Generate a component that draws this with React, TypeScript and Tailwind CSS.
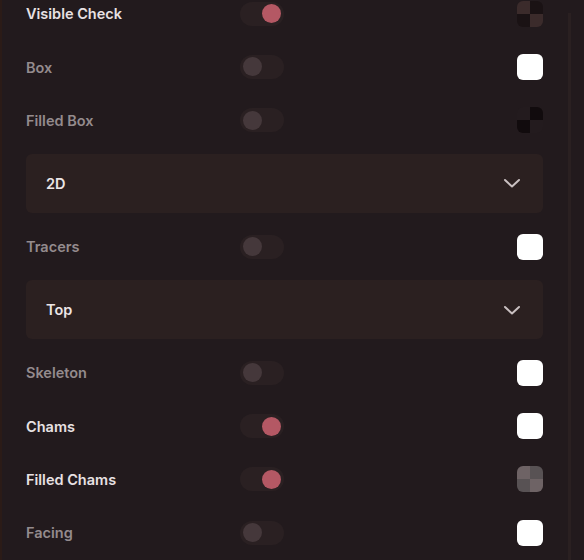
import React from "react";

type Swatch =
  | { kind: "white" }
  | { kind: "checker"; a: string; b: string };

type Row = {
  type: "row";
  label: string;
  on: boolean;
  swatch: Swatch;
};
type Drop = { type: "drop"; value: string };

const items: (Row | Drop)[] = [
  { type: "row", label: "Visible Check", on: true, swatch: { kind: "checker", a: "#3b2b2b", b: "#1a1214" } },
  { type: "row", label: "Box", on: false, swatch: { kind: "white" } },
  { type: "row", label: "Filled Box", on: false, swatch: { kind: "checker", a: "#231b1e", b: "#110b0d" } },
  { type: "drop", value: "2D" },
  { type: "row", label: "Tracers", on: false, swatch: { kind: "white" } },
  { type: "drop", value: "Top" },
  { type: "row", label: "Skeleton", on: false, swatch: { kind: "white" } },
  { type: "row", label: "Chams", on: true, swatch: { kind: "white" } },
  { type: "row", label: "Filled Chams", on: true, swatch: { kind: "checker", a: "#6e6365", b: "#585254" } },
  { type: "row", label: "Facing", on: false, swatch: { kind: "white" } },
];

function Toggle({ on }: { on: boolean }) {
  return (
    <div className={`flex h-[24px] w-[44px] items-center rounded-full bg-[#2a2022] px-[3px] ${on ? "justify-end" : "justify-start"}`}>
      <div className={`h-[19px] w-[19px] rounded-full ${on ? "bg-[#b45864]" : "bg-[#45383b]"}`} />
    </div>
  );
}

function SwatchBox({ s }: { s: Swatch }) {
  if (s.kind === "white") {
    return <div className="h-[26px] w-[26px] rounded-[6px] bg-white" />;
  }
  return (
    <div className="grid h-[26px] w-[26px] grid-cols-2 grid-rows-2 overflow-hidden rounded-[6px]">
      <div style={{ background: s.a }} />
      <div style={{ background: s.b }} />
      <div style={{ background: s.b }} />
      <div style={{ background: s.a }} />
    </div>
  );
}

export default function App() {
  return (
    <div
      className="relative h-[560px] w-[584px] overflow-hidden bg-[#221a1d] border-l-2 border-[#2b1b17]"
      style={{ fontFamily: "Inter, 'Noto Sans', sans-serif" }}
    >
      <div className="absolute right-[13px] top-[13px] bottom-0 w-[3px] bg-[#2a2021]" />
      <div className="-mt-[13px] flex flex-col pl-[24px] pr-[41px]">
        {items.map((it, i) =>
          it.type === "row" ? (
            <div key={i} className="flex h-[53.3px] items-center">
              <div
                className={`w-[214px] pt-[1px] text-[14.5px] font-semibold ${it.on ? "text-[#e8e1e3]" : "text-[#948b8d]"}`}
              >
                {it.label}
              </div>
              <Toggle on={it.on} />
              <div className="flex-1" />
              <SwatchBox s={it.swatch} />
            </div>
          ) : (
            <div
              key={i}
              className="my-[7px] flex h-[59px] items-center justify-between rounded-[6px] bg-[#2b2020] pl-[20px] pr-[22px]"
            >
              <span className="text-[14.5px] font-semibold text-[#ece5e6]">{it.value}</span>
              <svg width="18" height="18" viewBox="0 0 18 18" fill="none" stroke="#c9c0c1" strokeWidth="2" strokeLinecap="round" strokeLinejoin="round">
                <path d="M2 6l7 6.5 7-6.5" />
              </svg>
            </div>
          )
        )}
      </div>
    </div>
  );
}
